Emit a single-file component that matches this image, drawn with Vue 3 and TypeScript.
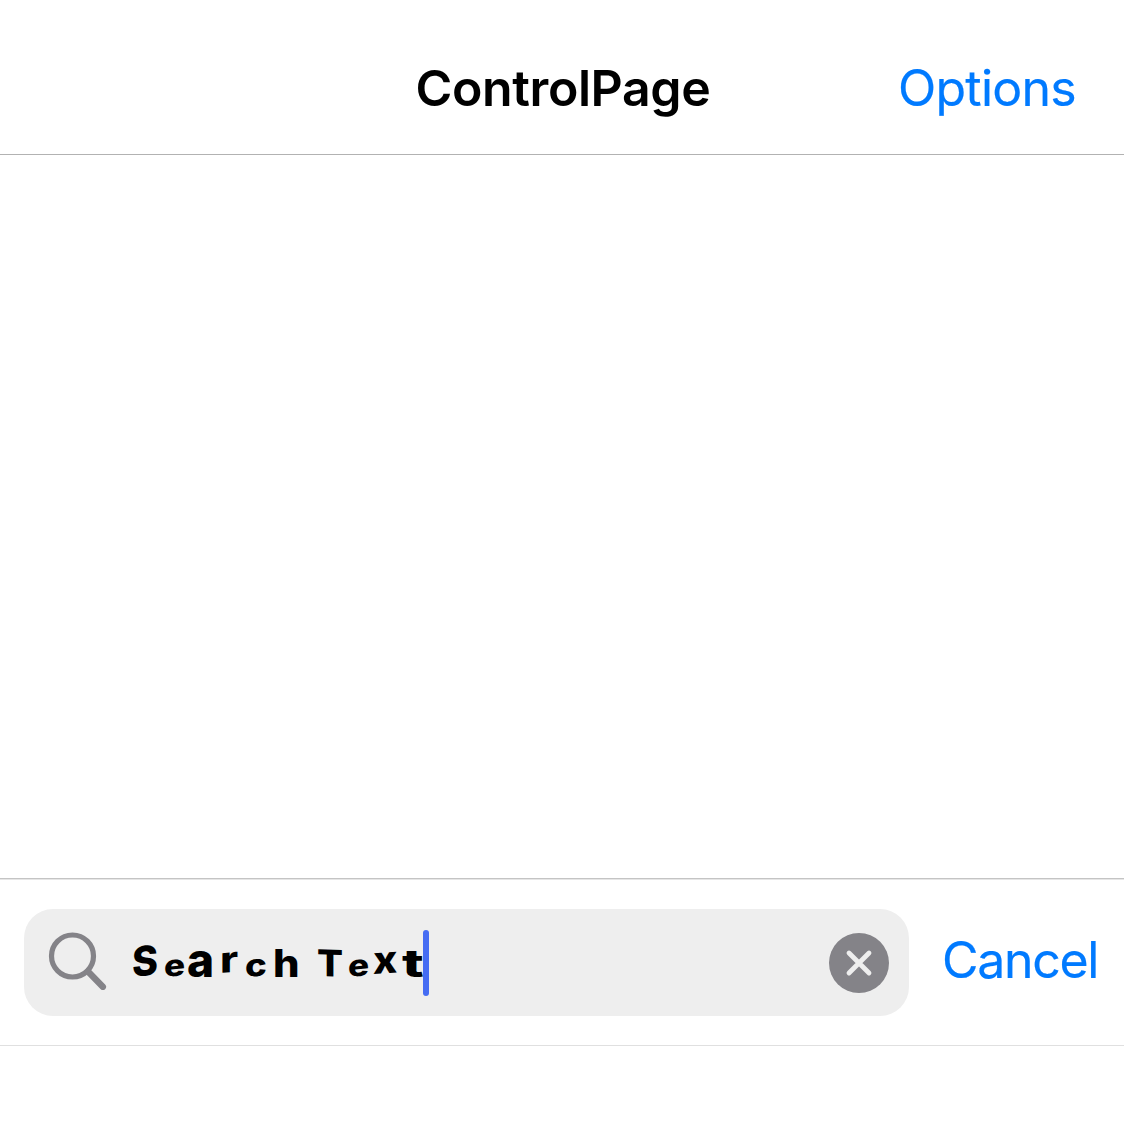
<script setup lang="ts">
import { ref } from 'vue'

interface Glyph {
  char: string
  advance: number
  size: number
  stretch: number
  lift: number
  tilt: number
}

const title = ref('ControlPage')

// Uneven letter proportions give the query its hand-drawn rhythm.
const query: Glyph[] = [
  { char: 'S', advance: 32, size: 41, stretch: 0.96, lift: 0, tilt: -6 },
  { char: 'e', advance: 23, size: 30, stretch: 1.17, lift: 0, tilt: -6 },
  { char: 'a', advance: 33, size: 47, stretch: 0.98, lift: 0, tilt: 0 },
  { char: 'r', advance: 25, size: 36, stretch: 1.2, lift: 4, tilt: -6 },
  { char: 'c', advance: 28, size: 31, stretch: 1.18, lift: 0, tilt: -5 },
  { char: 'h', advance: 44, size: 38, stretch: 1.1, lift: 0, tilt: 0 },
  { char: ' ', advance: 0, size: 37, stretch: 1, lift: 0, tilt: 0 },
  { char: 'T', advance: 31, size: 37, stretch: 1.04, lift: 1, tilt: 2 },
  { char: 'e', advance: 25, size: 30, stretch: 1.17, lift: 0, tilt: -6 },
  { char: 'x', advance: 29, size: 38, stretch: 1.08, lift: 3, tilt: -4 },
  { char: 't', advance: 21, size: 38, stretch: 1.5, lift: 0, tilt: 0 },
]
</script>

<template>
  <div class="screen">
    <header class="navbar">
      <h1 class="title">{{ title }}</h1>
      <button class="link options">Options</button>
    </header>
    <main class="content"></main>
    <section class="searchbar">
      <div class="field">
        <svg class="magnifier" width="60" height="60" viewBox="0 0 60 60">
          <circle cx="25.5" cy="26" r="21" />
          <path class="handle" d="M41 41.5 55.8 56.8" />
        </svg>
        <div class="query"><span
          v-for="(g, i) in query"
          :key="i"
          class="glyph"
          :style="{
            width: g.advance + 'px',
            fontSize: g.size + 'px',
            transform: `translateY(${-g.lift}px) scaleX(${g.stretch}) skewY(${g.tilt}deg)`,
          }"
        >{{ g.char }}</span></div>
        <span class="caret"></span>
        <svg class="clear" width="60" height="60" viewBox="0 0 60 60">
          <circle cx="30" cy="30" r="30" />
          <path d="M20 20 40 40M40 20 20 40" />
        </svg>
      </div>
      <button class="link cancel">Cancel</button>
    </section>
  </div>
</template>

<style>
body {
  margin: 0;
  background: #fff;
}
</style>

<style scoped>
.screen {
  display: flex;
  flex-direction: column;
  width: 1124px;
  height: 1126px;
  background: #fff;
  font-family: Inter, "Liberation Sans", sans-serif;
  overflow: hidden;
}
.navbar {
  display: grid;
  grid-template-columns: 1fr auto 1fr;
  align-items: center;
  box-sizing: border-box;
  height: 155px;
  padding: 22px 48px 0 50px;
  border-bottom: 1px solid #b2b2b2;
}
.title {
  grid-column: 2;
  margin: 0;
  font-size: 50px;
  line-height: 60px;
  font-weight: 600;
  letter-spacing: -0.4px;
  color: #000;
}
.link {
  padding: 0;
  border: 0;
  background: none;
  font-family: inherit;
  font-size: 50px;
  line-height: 60px;
  font-weight: 400;
  color: #007aff;
  -webkit-text-stroke: 0.2px #007aff;
  white-space: nowrap;
}
.options {
  justify-self: end;
  letter-spacing: -0.75px;
}
.content {
  flex: 1;
}
.searchbar {
  display: flex;
  align-items: center;
  box-sizing: border-box;
  height: 168px;
  margin-bottom: 80px;
  padding: 1px 0 0 24px;
  border-top: 1px solid #c4c4c4;
  border-bottom: 1px solid #e0e0e0;
  box-shadow: inset 0 1px #e6e6e6;
}
.field {
  display: flex;
  flex: none;
  align-items: center;
  box-sizing: border-box;
  width: 885px;
  height: 107px;
  padding: 0 20px 0 23px;
  border-radius: 29px;
  background: #eee;
}
.magnifier {
  flex: none;
  margin-bottom: 5px;
  fill: none;
  stroke: #848388;
  stroke-width: 5.2;
}
.handle {
  stroke-width: 6.5;
  stroke-linecap: round;
}
.query {
  display: flex;
  align-items: baseline;
  margin-left: 25px;
  font-weight: 800;
  line-height: 60px;
  color: #000;
}
.glyph {
  display: block;
  white-space: pre;
  transform-origin: left center;
}
.caret {
  width: 6px;
  height: 66px;
  border-radius: 3px;
  background: #456cf3;
}
.clear {
  flex: none;
  margin-left: auto;
  fill: #848388;
}
.clear path {
  fill: none;
  stroke: #eee;
  stroke-width: 4.8;
  stroke-linecap: round;
}
.cancel {
  margin: 0 0 5px 33px;
  letter-spacing: -1.3px;
}
</style>
